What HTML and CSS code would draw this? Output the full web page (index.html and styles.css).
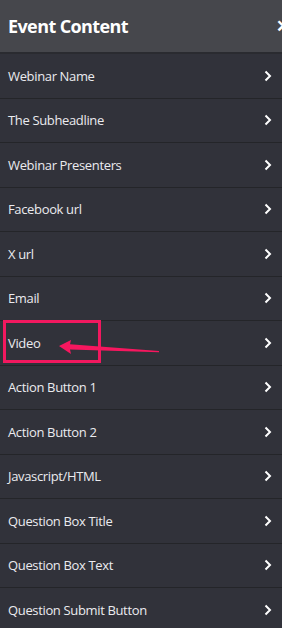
FILE: index.html
```html
<!DOCTYPE html>
<html>
<head>
<meta charset="utf-8">
<link rel="stylesheet" href="styles.css">
</head>
<body>
<div class="panel">
  <header class="head">
    <h1 class="title">Event Content</h1>
    <span class="close">✕</span>
  </header>
  <ul class="list">
    <li class="row"><span>Webinar Name</span><svg class="chev" viewBox="0 0 8 12"><path d="M1.5 1.5 L6 6 L1.5 10.5"/></svg></li>
    <li class="row"><span>The Subheadline</span><svg class="chev" viewBox="0 0 8 12"><path d="M1.5 1.5 L6 6 L1.5 10.5"/></svg></li>
    <li class="row"><span>Webinar Presenters</span><svg class="chev" viewBox="0 0 8 12"><path d="M1.5 1.5 L6 6 L1.5 10.5"/></svg></li>
    <li class="row"><span>Facebook url</span><svg class="chev" viewBox="0 0 8 12"><path d="M1.5 1.5 L6 6 L1.5 10.5"/></svg></li>
    <li class="row"><span>X url</span><svg class="chev" viewBox="0 0 8 12"><path d="M1.5 1.5 L6 6 L1.5 10.5"/></svg></li>
    <li class="row"><span>Email</span><svg class="chev" viewBox="0 0 8 12"><path d="M1.5 1.5 L6 6 L1.5 10.5"/></svg></li>
    <li class="row highlight"><span>Video</span><svg class="chev" viewBox="0 0 8 12"><path d="M1.5 1.5 L6 6 L1.5 10.5"/></svg>
      <span class="box"></span>
      <svg class="arrow" viewBox="0 0 110 20" width="110" height="20"><path d="M0 4 L12 -2 L11 2.2 L100 9 L100 10.2 L11 7.5 L12 12 Z"/></svg>
    </li>
    <li class="row"><span>Action Button 1</span><svg class="chev" viewBox="0 0 8 12"><path d="M1.5 1.5 L6 6 L1.5 10.5"/></svg></li>
    <li class="row"><span>Action Button 2</span><svg class="chev" viewBox="0 0 8 12"><path d="M1.5 1.5 L6 6 L1.5 10.5"/></svg></li>
    <li class="row"><span>Javascript/HTML</span><svg class="chev" viewBox="0 0 8 12"><path d="M1.5 1.5 L6 6 L1.5 10.5"/></svg></li>
    <li class="row"><span>Question Box Title</span><svg class="chev" viewBox="0 0 8 12"><path d="M1.5 1.5 L6 6 L1.5 10.5"/></svg></li>
    <li class="row"><span>Question Box Text</span><svg class="chev" viewBox="0 0 8 12"><path d="M1.5 1.5 L6 6 L1.5 10.5"/></svg></li>
    <li class="row"><span>Question Submit Button</span><svg class="chev" viewBox="0 0 8 12"><path d="M1.5 1.5 L6 6 L1.5 10.5"/></svg></li>
  </ul>
</div>
</body>
</html>
```
FILE: styles.css
```css
html, body {
  margin: 0;
  padding: 0;
  background: #31323a;
  overflow: hidden;
}
.panel {
  width: 282px;
  font-family: "Open Sans", "Noto Sans", sans-serif;
  color: #ebebef;
}
.head {
  height: 52px;
  background: #46474c;
  border-bottom: 2px solid #2a2b30;
  display: flex;
  align-items: center;
  justify-content: space-between;
  padding-left: 8px;
  overflow: hidden;
}
.title {
  margin: 0;
  font-size: 18px;
  font-weight: 700;
  color: #ffffff;
  letter-spacing: -0.6px;
}
.close {
  font-size: 17px;
  font-weight: 700;
  color: #ffffff;
  margin-right: -8px;
  margin-top: -2px;
}
.list {
  list-style: none;
  margin: 0;
  padding: 0;
}
.row {
  position: relative;
  height: 43.5px;
  border-bottom: 1px solid #242529;
  display: flex;
  align-items: center;
  justify-content: space-between;
  padding: 0 10px 0 8px;
  font-size: 13px;
  letter-spacing: -0.35px;
  background: #31323a;
}
.chev {
  width: 8px;
  height: 12px;
  fill: none;
  stroke: #ffffff;
  stroke-width: 2;
}
.box {
  position: absolute;
  left: 3px;
  top: -1px;
  width: 92px;
  height: 37px;
  border: 3px solid #f2185f;
}
.arrow {
  position: absolute;
  left: 59px;
  top: 21px;
  overflow: visible;
  fill: #f7175f;
}
```
